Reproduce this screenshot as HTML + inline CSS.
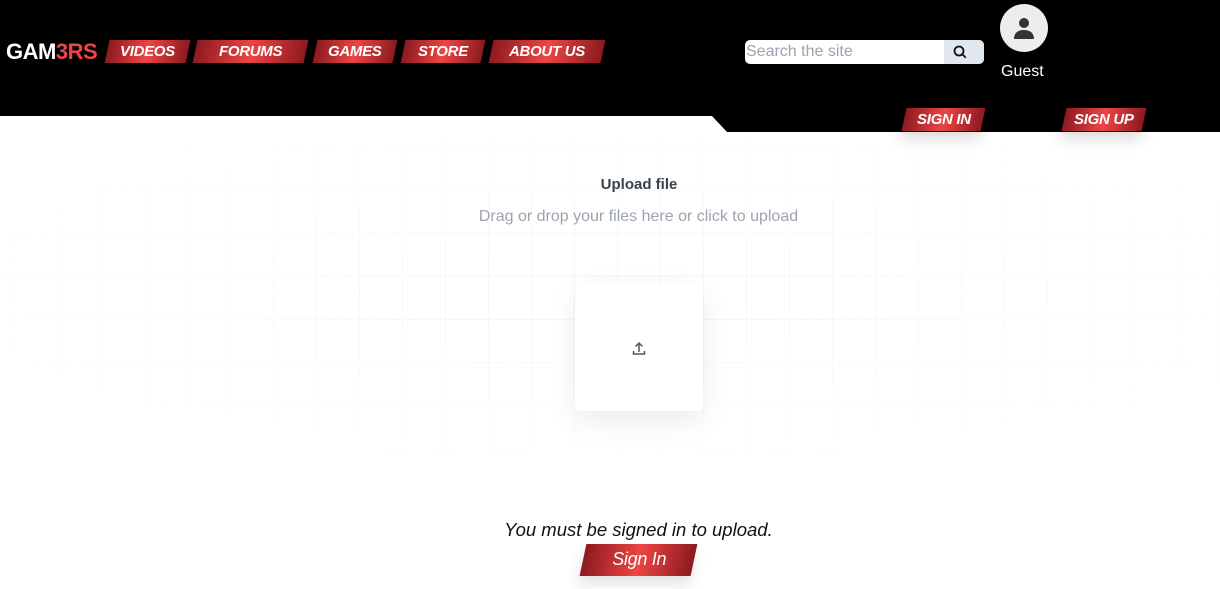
<!DOCTYPE html>
<html><head><style>
body{margin:0;width:1220px;height:589px;background:#fff;position:relative;overflow:hidden;font-family:"Liberation Sans",sans-serif}
.hdr{position:absolute;left:0;top:0;width:1220px;height:132px;background:#000;clip-path:polygon(0 0,1220px 0,1220px 132px,727px 132px,712px 116px,0 116px)}
.btn{position:absolute;height:23px;background:linear-gradient(90deg,#8b1a1f,#ef4444 50%,#8b1a1f);transform:skewX(-12deg);color:#fff;font-weight:bold;font-style:italic;font-size:15px;line-height:23px;text-align:center;letter-spacing:-0.3px}
.btn span{display:inline-block;transform:skewX(12deg)}
.logo{position:absolute;left:6px;top:39px;font-weight:bold;font-size:22px;color:#fff;letter-spacing:-0.5px}
.grid{position:absolute;left:0;top:132px;width:1220px;height:320px;background-image:linear-gradient(#f2f2f3 1px,transparent 1px),linear-gradient(90deg,#f2f2f3 1px,transparent 1px);background-size:43px 43px;background-position:15px 15px;opacity:.8;-webkit-mask-image:radial-gradient(ellipse 60% 60% at 50% 50%,#000,transparent)}
</style></head><body>
<div class="hdr"></div>
<div class="logo">GAM<span style="color:#ef4444">3RS</span></div>
<div class="btn" style="left:107px;top:40px;width:81px"><span>VIDEOS</span></div>
<div class="btn" style="left:195px;top:40px;width:111px"><span>FORUMS</span></div>
<div class="btn" style="left:315px;top:40px;width:80px"><span>GAMES</span></div>
<div class="btn" style="left:403px;top:40px;width:80px"><span>STORE</span></div>
<div class="btn" style="left:491px;top:40px;width:112px"><span>ABOUT US</span></div>
<div style="position:absolute;left:745px;top:40px;width:239px;height:24px;background:#fff;border-radius:5px"></div>
<div style="position:absolute;left:746px;top:43px;font-size:16px;color:#9ca3af">Search the site</div>
<div style="position:absolute;left:944px;top:40px;width:40px;height:24px;background:#e2e8f0;border-radius:0 5px 5px 0"></div>
<svg style="position:absolute;left:952px;top:44px" width="16" height="16" viewBox="0 0 16 16"><circle cx="7" cy="7" r="4.5" fill="none" stroke="#111" stroke-width="1.8"/><path d="M10.3 10.3l3.5 3.5" stroke="#111" stroke-width="1.8"/></svg>
<div style="position:absolute;left:1000px;top:4px;width:48px;height:48px;border-radius:50%;background:#eeedeb"></div>
<svg style="position:absolute;left:1012px;top:16px" width="24" height="24" viewBox="0 0 24 24"><circle cx="12" cy="7" r="5" fill="#333"/><path d="M2 23c0-6 4-9 10-9s10 3 10 9z" fill="#333"/></svg>
<div style="position:absolute;left:1001px;top:63px;color:#fff;font-size:16px">Guest</div>
<div class="btn" style="left:904px;top:108px;width:79px;box-shadow:0 8px 16px rgba(0,0,0,.15)"><span>SIGN IN</span></div>
<div class="btn" style="left:1064px;top:108px;width:80px;box-shadow:0 8px 16px rgba(0,0,0,.15)"><span>SIGN UP</span></div>
<div class="grid"></div>
<div style="position:absolute;left:0;width:1278px;top:176px;text-align:center;font-weight:bold;font-size:15px;color:#374151">Upload file</div>
<div style="position:absolute;left:0;width:1277px;top:208px;text-align:center;font-size:16px;color:#9ca3af">Drag or drop your files here or click to upload</div>
<div style="position:absolute;left:575px;top:284px;width:128px;height:127px;background:#fff;border-radius:6px;box-shadow:0 10px 30px rgba(0,0,0,.08)"></div>
<svg style="position:absolute;left:632px;top:340px" width="14" height="16" viewBox="0 0 14 16"><path d="M7 12V3M3.5 6.5L7 3l3.5 3.5M1.5 11v3h11v-3" fill="none" stroke="#555" stroke-width="1.5"/></svg>
<div style="position:absolute;left:0;width:1277px;top:519px;text-align:center;font-size:18.5px;font-style:italic;color:#111">You must be signed in to upload.</div>
<div class="btn" style="left:583px;top:544px;width:111px;height:32px;line-height:30px;font-weight:normal;font-size:18px;box-shadow:0 8px 14px rgba(0,0,0,.12)"><span>Sign In</span></div>
</body></html>
